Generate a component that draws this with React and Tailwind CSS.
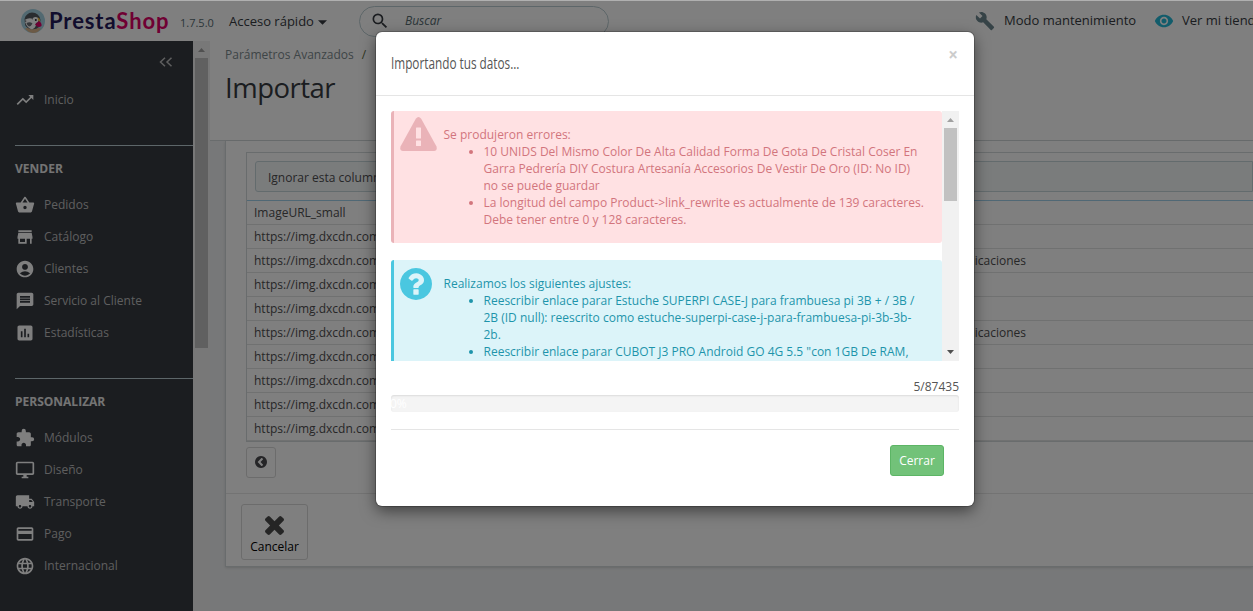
import {
  MdTrendingUp,
  MdShoppingBasket,
  MdStore,
  MdAccountCircle,
  MdMessage,
  MdAssessment,
  MdExtension,
  MdOutlineDesktopWindows,
  MdLocalShipping,
  MdPayment,
  MdLanguage,
  MdSearch,
  MdBuild,
  MdVisibility,
} from 'react-icons/md'

const menu = [
  {
    title: 'VENDER',
    items: [
      { icon: MdShoppingBasket, label: 'Pedidos' },
      { icon: MdStore, label: 'Catálogo' },
      { icon: MdAccountCircle, label: 'Clientes' },
      { icon: MdMessage, label: 'Servicio al Cliente' },
      { icon: MdAssessment, label: 'Estadísticas' },
    ],
  },
  {
    title: 'PERSONALIZAR',
    items: [
      { icon: MdExtension, label: 'Módulos' },
      { icon: MdOutlineDesktopWindows, label: 'Diseño' },
      { icon: MdLocalShipping, label: 'Transporte' },
      { icon: MdPayment, label: 'Pago' },
      { icon: MdLanguage, label: 'Internacional' },
    ],
  },
]

const rows = [
  ['ImageURL_small', ''],
  ['https://img.dxcdn.com', ''],
  ['https://img.dxcdn.com', 'comunicaciones'],
  ['https://img.dxcdn.com', ''],
  ['https://img.dxcdn.com', ''],
  ['https://img.dxcdn.com', 'comunicaciones'],
  ['https://img.dxcdn.com', ''],
  ['https://img.dxcdn.com', ''],
  ['https://img.dxcdn.com', ''],
  ['https://img.dxcdn.com', ''],
]

const errors = [
  [
    '10 UNIDS Del Mismo Color De Alta Calidad Forma De Gota De Cristal Coser En',
    'Garra Pedrería DIY Costura Artesanía Accesorios De Vestir De Oro (ID: No ID)',
    'no se puede guardar',
  ],
  [
    'La longitud del campo Product->link_rewrite es actualmente de 139 caracteres.',
    'Debe tener entre 0 y 128 caracteres.',
  ],
]

const notices = [
  [
    'Reescribir enlace parar Estuche SUPERPI CASE-J para frambuesa pi 3B + / 3B /',
    '2B (ID null): reescrito como estuche-superpi-case-j-para-frambuesa-pi-3b-3b-',
    '2b.',
  ],
  ['Reescribir enlace parar CUBOT J3 PRO Android GO 4G 5.5 "con 1GB De RAM,'],
]

function Logo() {
  return (
    <svg viewBox="0 0 24 24" className="h-6 w-6 shrink-0">
      <circle cx="12" cy="12" r="12" fill="#a5d3e3" />
      <path d="M4 19.500 Q12 17 20 19.500 Q17 24 12 24 Q7 23.500 4 19.500Z" fill="#d9b58c" />
      <path d="M3.500 10 Q5 4 11 3.500 Q18 3.500 19.500 11 L18 18 Q15 21 9 20 Q4 18 4 15Z" fill="#53585e" />
      <path d="M4 13 Q8 10 14 11 Q17 18 11 20.500 Q6 19 4 13Z" fill="#fff" />
      <path d="M3.500 11 Q8 8 12 10 L8 13Z" fill="#fff" />
      <path d="M5.500 14 Q9 12.500 11.500 14.500 Q10 17.500 8 17.500 Q6 16.500 5.500 14Z" fill="#6b7076" />
      <circle cx="14.500" cy="11" r="3" fill="#fff" />
      <circle cx="14.800" cy="11" r="1" fill="#222" />
      <path d="M14 15.500 L18 12 Q21 14 20.500 17 Q17 19.500 14 15.500Z" fill="#df0067" />
      <path d="M16.500 8.500 Q19.500 9 19 12.500 L17.500 12Z" fill="#f5c242" />
    </svg>
  )
}

function ChevronCircle() {
  return (
    <svg viewBox="0 0 1792 1792" className="h-[14px] w-[14px]" fill="#4a4a4f">
      <path d="M1037 1395l102-102q19-19 19-45t-19-45l-307-307 307-307q19-19 19-45t-19-45l-102-102q-19-19-45-19t-45 19l-454 454q-19 19-19 45t19 45l454 454q19 19 45 19t45-19zm627-499q0 209-103 385.500t-279.500 279.500-385.500 103-385.500-103-279.500-279.500-103-385.500 103-385.500 279.500-279.500 385.500-103 385.500 103 279.500 279.500 103 385.500z" />
    </svg>
  )
}

function Cross() {
  return (
    <svg viewBox="302 302 1188 1188" className="h-[19px] w-[19px]" fill="#4a4a4a">
      <path d="M1490 1322q0 40-28 68l-136 136q-28 28-68 28t-68-28l-294-294-294 294q-28 28-68 28t-68-28l-136-136q-28-28-28-68t28-68l294-294-294-294q-28-28-28-68t28-68l136-136q28-28 68-28t68 28l294 294 294-294q28-28 68-28t68 28l136 136q28 28 28 68t-28 68l-294 294 294 294q28 28 28 68z" transform="translate(0 -64)" />
    </svg>
  )
}

function Warning() {
  return (
    <svg viewBox="0 0 37 34" className="h-[34px] w-[37px]">
      <path d="M15.800 1.700 Q18.500 -1.600 21.200 1.700 L36.500 29.500 Q37.500 33.700 34 34 H3 Q-.5 33.700 .5 29.500Z" fill="#eab3b8" />
      <rect x="16" y="10.500" width="5" height="11" rx=".5" fill="#ffe1e3" />
      <rect x="16" y="23.500" width="5" height="5.500" rx=".5" fill="#ffe1e3" />
    </svg>
  )
}

function Question() {
  return (
    <svg viewBox="128 128 1536 1536" className="h-8 w-8" fill="#4ac7e0">
      <path d="M1024 1376v-192q0-14-9-23t-23-9h-192q-14 0-23 9t-9 23v192q0 14 9 23t23 9h192q14 0 23-9t9-23zm256-672q0-88-55.500-163t-138.500-116-170-41q-243 0-371 213-15 24 8 42l132 100q7 6 19 6 16 0 25-12 53-68 86-92 34-24 86-24 48 0 85.500 26t37.500 59q0 38-20 61t-68 45q-63 28-115.500 86.500t-52.500 125.500v36q0 14 9 23t23 9h192q14 0 23-9t9-23q0-19 21.500-49.500t54.500-49.500q32-18 49-28.500t46-35 44.500-48 28-60.500 12.500-81zm384 192q0 209-103 385.500t-279.500 279.500-385.500 103-385.500-103-279.500-279.500-103-385.500 103-385.500 279.500-279.500 385.500-103 385.500 103 279.500 279.500 103 385.500z" />
    </svg>
  )
}

function Messages({ title, items }) {
  return (
    <div className="whitespace-nowrap">
      <p>{title}</p>
      <ul className="list-disc pl-10">
        {items.map((lines, i) => (
          <li key={i}>
            {lines.map(line => (
              <span key={line} className="block">{line}</span>
            ))}
          </li>
        ))}
      </ul>
    </div>
  )
}

function Header() {
  return (
    <header className="flex h-10 shrink-0 items-center bg-white text-[13px] text-[#363a41]">
      <div className="flex w-[229px] shrink-0 items-center pl-[21px]">
        <Logo />
        <span className="ml-1 w-[131px] font-['Lato'] text-[22px] leading-6 font-bold tracking-[0.9px] text-[#251b5b]">
          Presta<span className="text-[#df0067]">Shop</span>
        </span>
        <span className="mt-1 text-[11px] text-[#576c72]">1.7.5.0</span>
      </div>
      <div className="flex w-[130px] shrink-0 items-center gap-1">
        <span className="pt-0.5">Acceso rápido</span>
        <svg viewBox="0 0 10 5" className="mt-0.5 h-[5px] w-[9px]"><path d="M0 0H10L5 5Z" fill="#363a41" /></svg>
      </div>
      <div className="flex h-[31px] w-[250px] shrink-0 items-center rounded-full border border-[#bbcdd2] pl-2.5">
        <MdSearch className="h-5 w-5" />
        <span className="ml-[15px] text-[12px] text-[#576c72] italic">Buscar</span>
      </div>
      <div className="ml-[366px] flex shrink-0 items-center whitespace-nowrap">
        <MdBuild className="h-5 w-5 text-[#6c868e]" />
        <span className="ml-[9px] w-[150px]">Modo mantenimiento</span>
        <MdVisibility className="h-5 w-5 text-[#25b9d7]" />
        <span className="ml-2">Ver mi tienda</span>
      </div>
    </header>
  )
}

function Sidebar() {
  return (
    <nav className="w-[193px] shrink-0 bg-[#363a41] pl-[15px] text-[12px] text-[#bebebe]">
      <div className="flex h-[43px] items-center justify-end pr-5 pb-0.5">
        <svg viewBox="0 0 14 10" className="h-2.5 w-[14px]" fill="none" stroke="#bebebe" strokeWidth="1.5">
          <path d="M6 .7 1.500 5 6 9.300M12.500 .7 8 5 12.500 9.300" />
        </svg>
      </div>
      <div className="flex h-8 items-center">
        <MdTrendingUp className="h-5 w-5 text-white" />
        <span className="ml-[9px]">Inicio</span>
      </div>
      {menu.map(group => (
        <div key={group.title} className="mt-[29px] border-t border-[#bbcdd2] pt-3.5">
          <h2 className="h-[29px] leading-[18px] font-bold text-[#e8e8e8]">{group.title}</h2>
          {group.items.map(item => (
            <div key={item.label} className="flex h-8 items-center">
              <item.icon className="h-5 w-5 text-white" />
              <span className="ml-[9px]">{item.label}</span>
            </div>
          ))}
        </div>
      ))}
    </nav>
  )
}

function ImportPanel() {
  return (
    <div className="ml-[15px] h-[426px] border-b border-l border-[#d3d8db] bg-white shadow-sm">
      <div className="pt-[11px] pl-5">
        <div className="h-[290px] border-t border-b border-l border-[#d3d8db]">
          <div className="h-12 border-b border-[#a0d0eb] pt-2 pl-2">
            <div className="flex h-[31px] items-center rounded-l-[3px] border border-[#c7d6db] bg-[#f5f8f9] pt-0.5 pl-3">
              Ignorar esta columna
            </div>
          </div>
          {rows.map(([image, category], i) => (
            <div key={i} className="flex h-6 items-center border-b border-[#e0e2e3] pl-[7px]">
              <span className="w-[600px]">{image}</span>
              <span className="w-[172px] text-right">{category}</span>
            </div>
          ))}
        </div>
        <div className="mt-[5px] flex h-[31px] w-[30px] items-center justify-center rounded-[3px] border border-[#d8d8d8] pb-px">
          <ChevronCircle />
        </div>
      </div>
      <div className="mt-[15px] border-t border-[#e6e6e6] pt-2.5 pl-[15px]">
        <div className="flex h-14 w-[67px] flex-col items-center rounded-[3px] border border-[#d8d8d8] pt-[11px] text-black">
          <Cross />
          <span className="mt-[3px] leading-[17px]">Cancelar</span>
        </div>
      </div>
    </div>
  )
}

function ImportModal() {
  return (
    <div className="h-[474px] w-[598px] rounded-md bg-white text-[12px] leading-[17px] text-[#555] shadow-[0_0_0_1px_rgba(0,0,0,0.2),0_5px_15px_rgba(0,0,0,0.5)]">
      <div className="flex h-16 items-center justify-between border-b border-[#e5e5e5] px-[15px]">
        <h4 className="origin-left scale-x-[0.735] text-[16px] whitespace-nowrap">Importando tus datos...</h4>
        <span className="-mt-[19px] w-3 text-center text-[17px] font-bold text-[#ccc]">×</span>
      </div>
      <div className="px-[15px] pt-[15px]">
        <div className="flex h-[250px] overflow-hidden">
          <div className="w-[551px] shrink-0">
            <div className="flex h-[132px] rounded-[3px] border-l-[3px] border-[#eab3b8] bg-[#ffe1e3] pt-[15px] text-[#d2757d]">
              <div className="-mt-[9px] w-[49.5px] shrink-0 pl-1.5"><Warning /></div>
              <Messages title="Se produjeron errores:" items={errors} />
            </div>
            <div className="mt-[17px] flex h-[132px] rounded-t-[3px] border-l-[3px] border-[#4ac7e0] bg-[#dcf4f9] pt-[15px] text-[#1e94ab]">
              <div className="-mt-[7px] w-[49.5px] shrink-0 pl-1.5"><Question /></div>
              <Messages title="Realizamos los siguientes ajustes:" items={notices} />
            </div>
          </div>
          <div className="flex w-[17px] flex-col items-center bg-[#f1f1f1]">
            <svg viewBox="0 0 17 17" className="h-[17px] w-[17px] shrink-0"><path d="M5 11H12L8.500 7Z" fill="#a0a0a0" /></svg>
            <div className="h-[73px] w-[13px] bg-[#c1c1c1]" />
            <svg viewBox="0 0 17 17" className="mt-auto h-[17px] w-[17px] shrink-0"><path d="M5 6H12L8.500 10Z" fill="#505050" /></svg>
          </div>
        </div>
        <div className="mt-[17px] text-right">5/87435</div>
        <div className="h-[17px] rounded-[3px] bg-[#f4f4f4] text-[12px] leading-[18px] text-white shadow-[inset_0_1px_2px_rgba(0,0,0,0.1)]">
          <span className="-ml-px">0%</span>
        </div>
        <div className="mt-[17px] flex justify-end border-t border-[#e5e5e5] pt-[15px] pr-[15px]">
          <button className="h-[31px] w-[54px] rounded-[3px] border border-[#5cb565] bg-[#72c279] text-white">Cerrar</button>
        </div>
      </div>
    </div>
  )
}

export default function App() {
  return (
    <div className="relative flex h-[611px] w-[1253px] flex-col overflow-hidden border-t border-[#b0b0b0] bg-[#eff1f2] font-['Open_Sans',sans-serif]">
      <Header />
      <div className="flex min-h-0 flex-1">
        <Sidebar />
        <div className="flex w-[17px] shrink-0 flex-col items-center bg-[#f1f1f1]">
          <svg viewBox="0 0 17 17" className="h-[17px] w-[17px] shrink-0"><path d="M5 11H12L8.500 7Z" fill="#a0a0a0" /></svg>
          <div className="h-[290px] w-[13px] bg-[#c1c1c1]" />
        </div>
        <main className="min-w-0 flex-1 text-[12px] text-[#4e4e50]">
          <div className="h-[100px] border-b border-[#d3d8db] bg-white pl-[15px]">
            <div className="pt-[5px] leading-[18px] text-[#7d8a8e]">
              Parámetros Avanzados <span className="ml-[5px] text-[#606a40]">/</span>
            </div>
            <h1 className="mt-[5px] text-[27.5px] leading-[38px] tracking-[-0.5px] text-[#363a41]">Importar</h1>
          </div>
          <ImportPanel />
        </main>
      </div>

      {/* Modal */}
      <div className="absolute inset-0 flex justify-center bg-black/50 pt-[31px] pl-[97px]">
        <ImportModal />
      </div>
    </div>
  )
}
